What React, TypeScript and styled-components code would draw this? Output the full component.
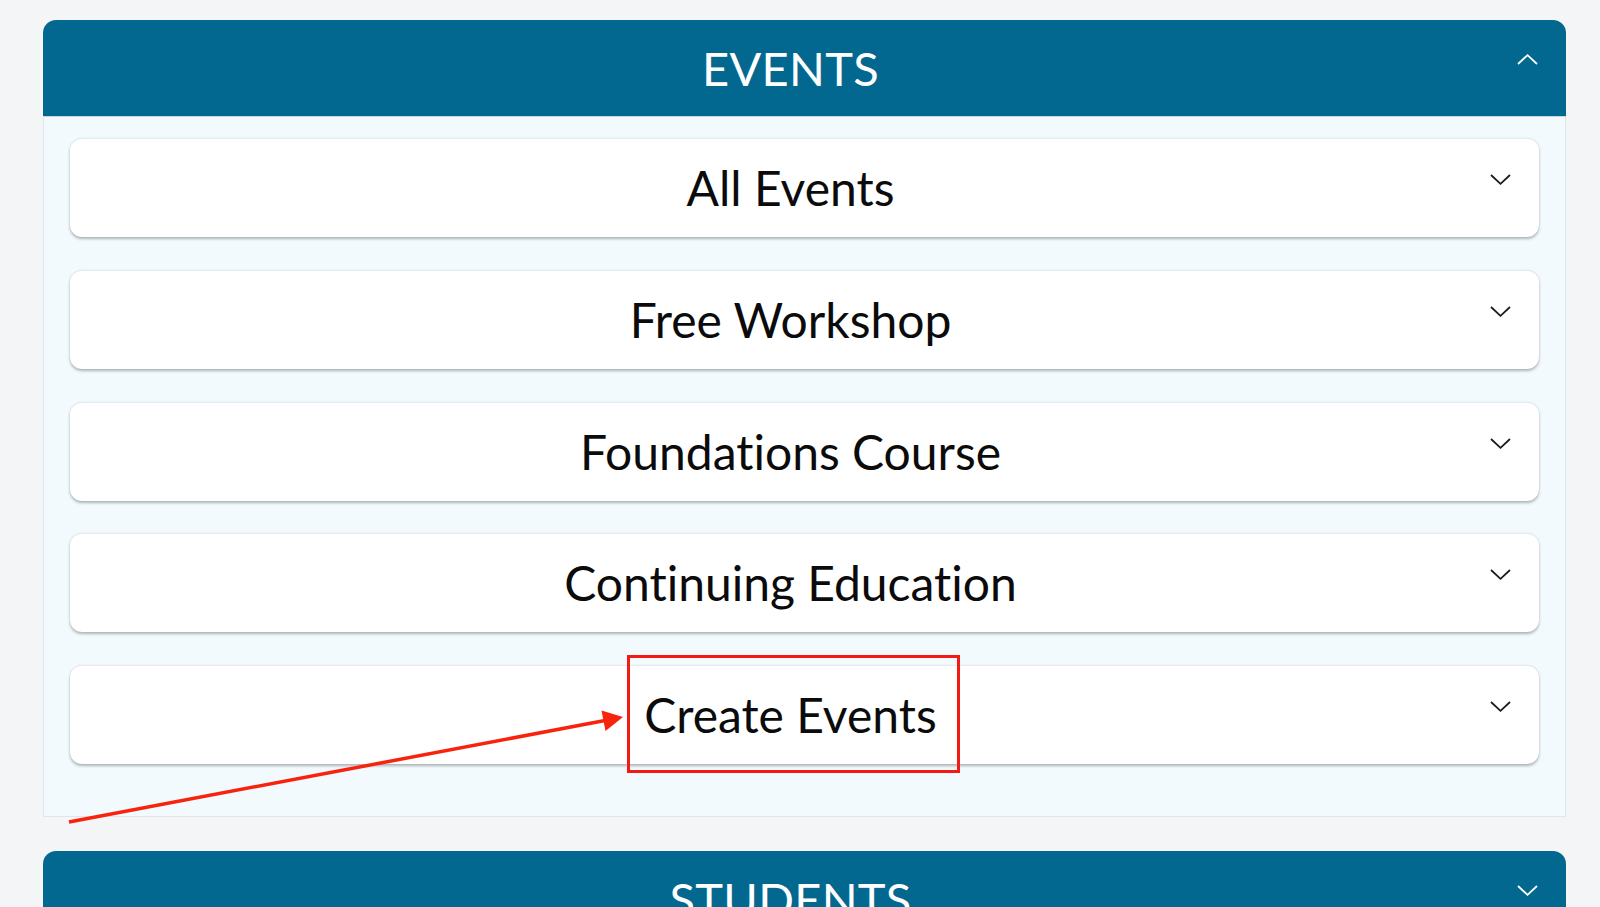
import styled, { createGlobalStyle } from 'styled-components'

const GlobalStyle = createGlobalStyle`
  html, body {
    margin: 0;
    padding: 0;
    background: #f4f5f7;
    font-family: Lato, "Open Sans", sans-serif;
    font-variant-ligatures: none;
  }
`

const Page = styled.div`
  position: relative;
  width: 1600px;
  height: 907px;
  overflow: hidden;
  padding: 20px 34px 0 43px;
  box-sizing: border-box;
  display: flex;
  flex-direction: column;
  gap: 34px;
`

const Panel = styled.section`
  display: flex;
  flex-direction: column;
`

const Header = styled.div`
  height: 96px;
  flex-shrink: 0;
  background: #03688f;
  border-radius: 13px 13px 0 0;
  display: flex;
  padding: 0 28px;
  color: #fff;
`

const HeaderTitle = styled.h2`
  flex: 1;
  margin: 0;
  text-align: center;
  font-size: 47px;
  font-weight: 400;
  line-height: 96px;
  letter-spacing: 0.3px;
`

const IconBox = styled.div<{ top: number }>`
  width: 28px;
  display: flex;
  justify-content: flex-end;
  align-items: flex-start;
  padding-top: ${(p) => p.top}px;
`

const Body = styled.div`
  background: #f2fafd;
  border: 1px solid #dfe5ea;
  border-top-color: #c9d6de;
  padding: 21px 26px 52px;
  display: flex;
  flex-direction: column;
  gap: 32.75px;
`

const Item = styled.div`
  height: 99px;
  background: #fff;
  border-radius: 12px;
  border-top: 1px solid #e6ebef;
  box-shadow: 0 2px 3px rgba(0, 0, 0, 0.28), 0 0 1px rgba(0, 0, 0, 0.12);
  display: flex;
  padding: 0 28px;
  box-sizing: border-box;
`

const ItemLabel = styled.span`
  flex: 1;
  text-align: center;
  font-size: 48px;
  line-height: 98px;
  color: #0b0b0b;
`

const Overlay = styled.svg`
  position: absolute;
  left: 0;
  top: 0;
  pointer-events: none;
`

function Chevron({ up, color }: { up?: boolean; color: string }) {
  return (
    <svg width="21" height="11" viewBox="0 0 21 11">
      <polyline
        points={up ? '1,10 10.5,1.2 20,10' : '1,1 10.5,9.8 20,1'}
        fill="none"
        stroke={color}
        strokeWidth="1.8"
      />
    </svg>
  )
}

const items = [
  'All Events',
  'Free Workshop',
  'Foundations Course',
  'Continuing Education',
  'Create Events',
]

export default function App() {
  return (
    <>
      <GlobalStyle />
      <Page>
        <Panel>
          <Header>
            <HeaderTitle>EVENTS</HeaderTitle>
            <IconBox top={34}>
              <Chevron up color="#ffffff" />
            </IconBox>
          </Header>
          <Body>
            {items.map((label) => (
              <Item key={label}>
                <ItemLabel>{label}</ItemLabel>
                <IconBox top={35}>
                  <Chevron color="#1d1d1d" />
                </IconBox>
              </Item>
            ))}
          </Body>
        </Panel>
        <Panel>
          <Header>
            <HeaderTitle>STUDENTS</HeaderTitle>
            <IconBox top={34}>
              <Chevron color="#ffffff" />
            </IconBox>
          </Header>
        </Panel>

        {/* annotation on top of the screenshot */}
        <Overlay width="1600" height="907" viewBox="0 0 1600 907">
          <rect
            x="628.5"
            y="656.5"
            width="330"
            height="115"
            fill="none"
            stroke="#f21a12"
            strokeWidth="3"
          />
          <line x1="69" y1="822" x2="605" y2="720.5" stroke="#f8230d" strokeWidth="3.5" />
          <polygon points="623,717 601.5,710.5 605.5,731" fill="#f8230d" />
        </Overlay>
      </Page>
    </>
  )
}
